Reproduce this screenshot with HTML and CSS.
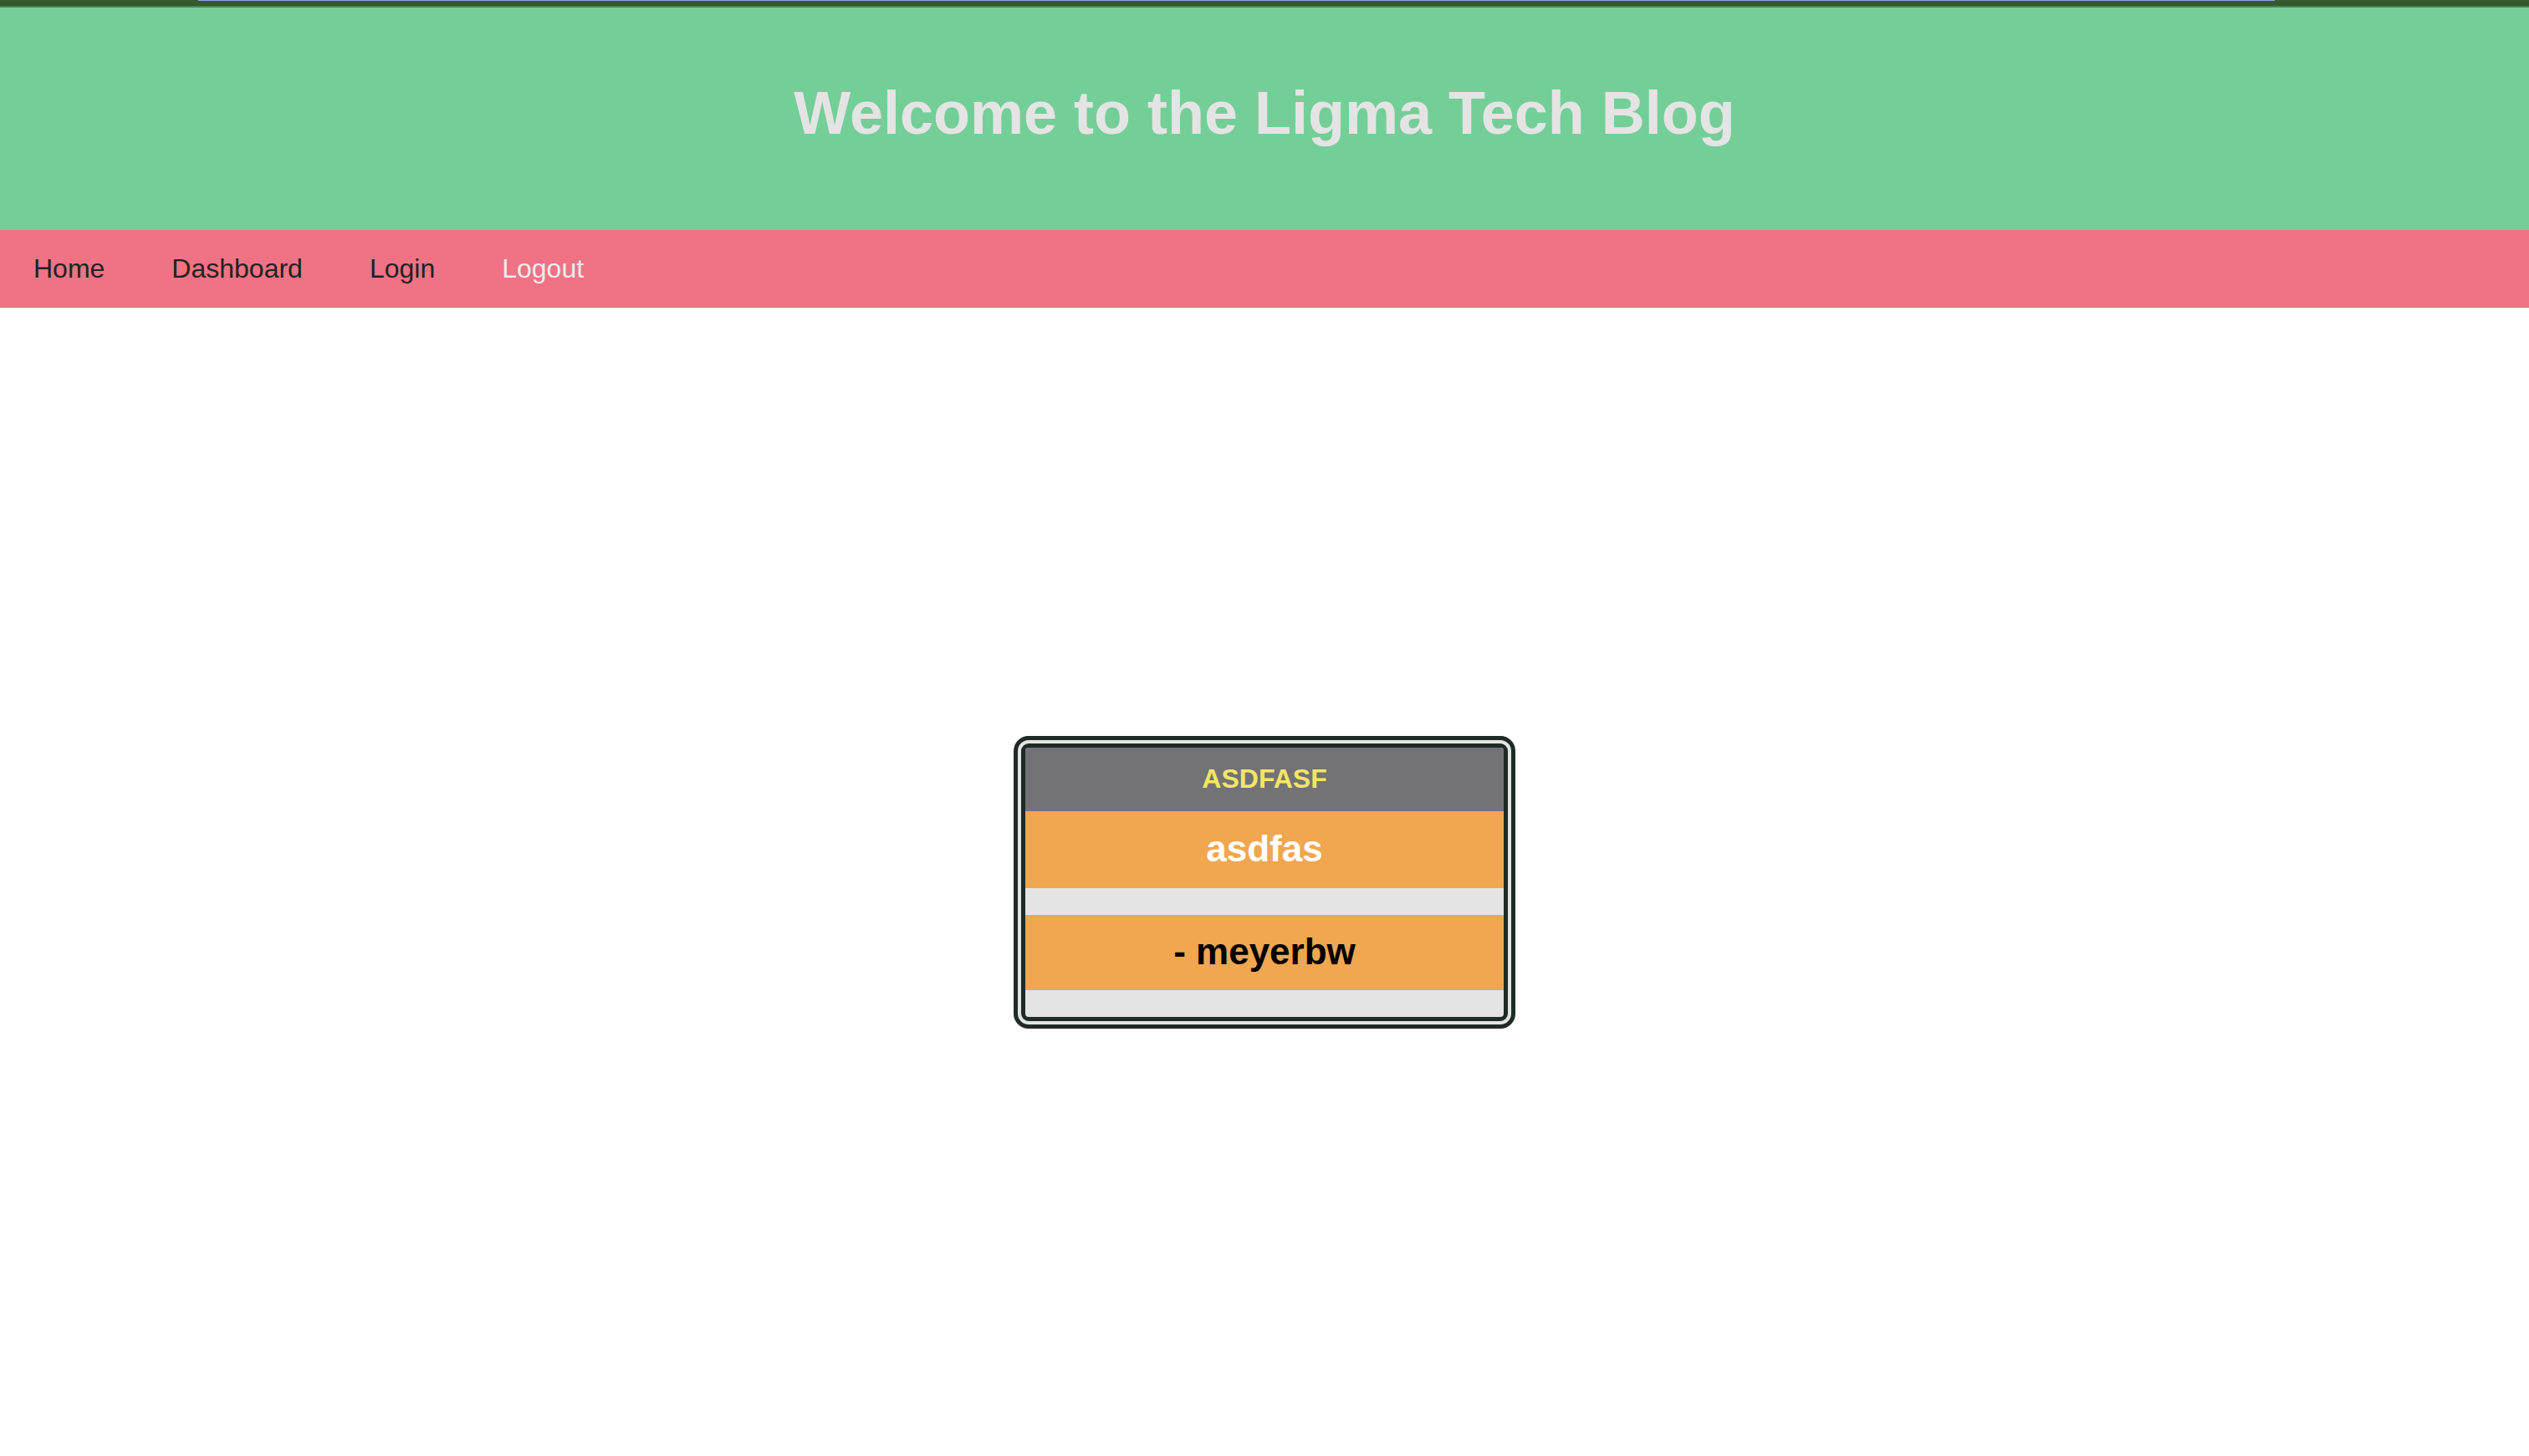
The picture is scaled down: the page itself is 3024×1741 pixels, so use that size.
FILE: index.html
```html
<!DOCTYPE html>
<html lang="en">
<head>
<meta charset="utf-8">
<title>Ligma Tech Blog</title>
<link rel="stylesheet" href="styles.css">
</head>
<body>
<div class="topbar"><div class="topbar-line"></div></div>
<header class="site-header">
  <h1 class="site-title">Welcome to the Ligma Tech Blog</h1>
</header>
<nav class="site-nav">
  <a class="nav-link" href="#">Home</a>
  <a class="nav-link" href="#">Dashboard</a>
  <a class="nav-link" href="#">Login</a>
  <a class="nav-link nav-link-light" href="#">Logout</a>
</nav>
<main class="content">
  <article class="post-card">
    <h2 class="post-title">asdfasf</h2>
    <div class="post-body">asdfas</div>
    <div class="post-author">- meyerbw</div>
  </article>
</main>
</body>
</html>
```
FILE: styles.css
```css
* { box-sizing: border-box; }
html, body { margin: 0; padding: 0; }
body {
  font-family: "Liberation Sans", Arial, sans-serif;
  background: #ffffff;
  min-height: 100vh;
  display: flex;
  flex-direction: column;
}
.topbar {
  height: 9px;
  background: #325a2d;
  border-bottom: 2px solid #5b7a55;
  display: flex;
  flex-direction: column;
}
.topbar-line {
  height: 1px;
  margin: 0 304px 0 237px;
  background: #8ea4e2;
}
.site-header {
  background: #74ce98;
  padding: 85px 0 99px;
  display: flex;
  justify-content: center;
}
.site-title {
  margin: 0;
  font-size: 72px;
  line-height: 82px;
  font-weight: bold;
  color: #e4e4e4;
}
.site-nav {
  background: #ef7384;
  height: 93px;
  display: flex;
  align-items: center;
}
.nav-link {
  padding: 0 40px;
  font-size: 32px;
  color: #222222;
  text-decoration: none;
}
.nav-link-light { color: #ececec; }
.content {
  flex: 1;
  display: flex;
  align-items: center;
  justify-content: center;
}
.post-card {
  width: 600px;
  border: 14px double #1f2b25;
  border-radius: 18px;
  background: #e4e4e4;
  overflow: hidden;
  padding-bottom: 32px;
  text-align: center;
  font-weight: bold;
}
.post-title {
  margin: 0;
  padding: 19px 20px 21px;
  background: #737277;
  color: #f4e566;
  font-size: 32px;
  line-height: 36px;
  text-transform: uppercase;
}
.post-body {
  padding: 19px 20px 21px;
  background: #f1a650;
  color: #ffffff;
  font-size: 44px;
  line-height: 52px;
  margin-bottom: 32px;
}
.post-author {
  padding: 19px 20px 21px;
  background: #f1a650;
  color: #000000;
  font-size: 44px;
  line-height: 50px;
}
```
